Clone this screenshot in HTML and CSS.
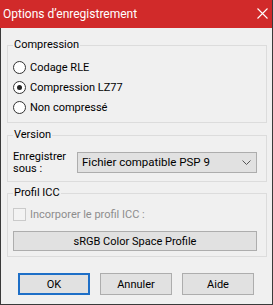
FILE: index.html
```html
<!DOCTYPE html>
<html>
<head>
  <meta charset="UTF-8">
  <title>Options d'enregistrement</title>
  <link rel="stylesheet" href="styles.css">
</head>
<body>
  <div class="window">
    <div class="titlebar">
      <span class="title">Options d’enregistrement</span>
      <svg class="close" width="11" height="11" viewBox="0 0 11 11"><path d="M0.5 0.5 L10.5 10.5 M10.5 0.5 L0.5 10.5" stroke="#fff" stroke-width="1.1" fill="none"/></svg>
    </div>
    <div class="content">
      <fieldset class="group group-compression">
        <legend>Compression</legend>
        <label class="radio"><span class="dot"></span>Codage RLE</label>
        <label class="radio"><span class="dot checked"></span>Compression LZ77</label>
        <label class="radio"><span class="dot"></span>Non compressé</label>
      </fieldset>
      <fieldset class="group group-version">
        <legend>Version</legend>
        <div class="save-row">
          <span class="save-label">Enregistrer<br>sous :</span>
          <div class="select">
            <span>Fichier compatible PSP 9</span>
            <svg width="9" height="5" viewBox="0 0 9 5"><path d="M0.5 0.5 L4.5 4.5 L8.5 0.5" stroke="#555" stroke-width="1" fill="none"/></svg>
          </div>
        </div>
      </fieldset>
      <fieldset class="group group-icc">
        <legend>Profil ICC</legend>
        <label class="check disabled"><span class="box"></span>Incorporer le profil ICC :</label>
        <div class="btn wide">sRGB Color Space Profile</div>
      </fieldset>
      <div class="footer">
        <div class="btn default">OK</div>
        <div class="btn">Annuler</div>
        <div class="btn">Aide</div>
      </div>
    </div>
  </div>
</body>
</html>
```

FILE: styles.css
```css
:root {
  --title-red: #d12a2a; --face: #f0f0f0; --group-line: #dcdcdc;
  --btn-bg: #e1e1e1; --btn-border: #adadad; --text: #000000; --muted: #8d8d8d;
}
html, body { margin: 0; padding: 0; }
body { font-family: Roboto, "Open Sans", sans-serif; font-size: 11px; color: var(--text); }
.window {
  width: 273px; height: 305px; box-sizing: border-box; background: var(--face);
  border: 1px solid #3a3a3a; border-top: none; display: flex; flex-direction: column;
}
.titlebar {
  height: 28px; flex-shrink: 0; background: var(--title-red); color: #fff; display: flex;
  align-items: center; justify-content: space-between; padding: 0 4px 1px 3px; margin: 0 -1px;
  border-right: 1px solid #3a3a3a; box-sizing: border-box;
}
.title { font-size: 12px; }
.close { margin-top: 0; }
.content { padding: 10px 5px 0 6px; display: flex; flex-direction: column; }
.group {
  margin: 0; padding: 0 9px 0 5px; border: 1px solid var(--group-line);
  min-width: 0;
}
.group legend { padding: 0 1px; line-height: 14px; }
.group-compression { padding-top: 5px; padding-bottom: 5px; }
.radio { display: flex; align-items: center; height: 20px; }
.dot {
  width: 11px; height: 11px; border: 1px solid #333; border-radius: 50%;
  background: #fff; margin-right: 4px; position: relative; flex-shrink: 0;
}
.dot.checked:after {
  content: ""; position: absolute; left: 3px; top: 3px; width: 5px; height: 5px;
  border-radius: 50%; background: #222;
}
.group-version { margin-top: 5px; padding-top: 7px; padding-bottom: 6px; }
.save-row { display: flex; align-items: center; height: 26px; }
.save-label { width: 64px; flex-shrink: 0; line-height: 12px; padding-top: 1px; }
.select {
  flex: 1; height: 21px; box-sizing: border-box; border: 1px solid var(--btn-border); background: var(--btn-bg);
  display: flex; align-items: center; justify-content: space-between; padding: 0 5px 0 4px;
  white-space: nowrap; font-size: 11.5px;
}
.group-icc { margin-top: 4px; padding-top: 4px; padding-bottom: 5px; }
.check { display: flex; align-items: center; height: 20px; }
.check.disabled { color: var(--muted); }
.box {
  width: 11px; height: 11px; border: 1px solid #cacaca; background: #f3f3f3;
  margin-right: 4px; flex-shrink: 0;
}
.btn {
  border: 1px solid var(--btn-border); background: var(--btn-bg);
  display: flex; align-items: center; justify-content: center; box-sizing: border-box;
}
.btn.wide { margin-top: 7px; height: 20px; }
.footer { display: flex; gap: 10px; padding: 16px 0 0 11px; }
.footer .btn { width: 72px; height: 22px; }
.footer .btn.default { border: 2px solid #1e6fc7; }
```
